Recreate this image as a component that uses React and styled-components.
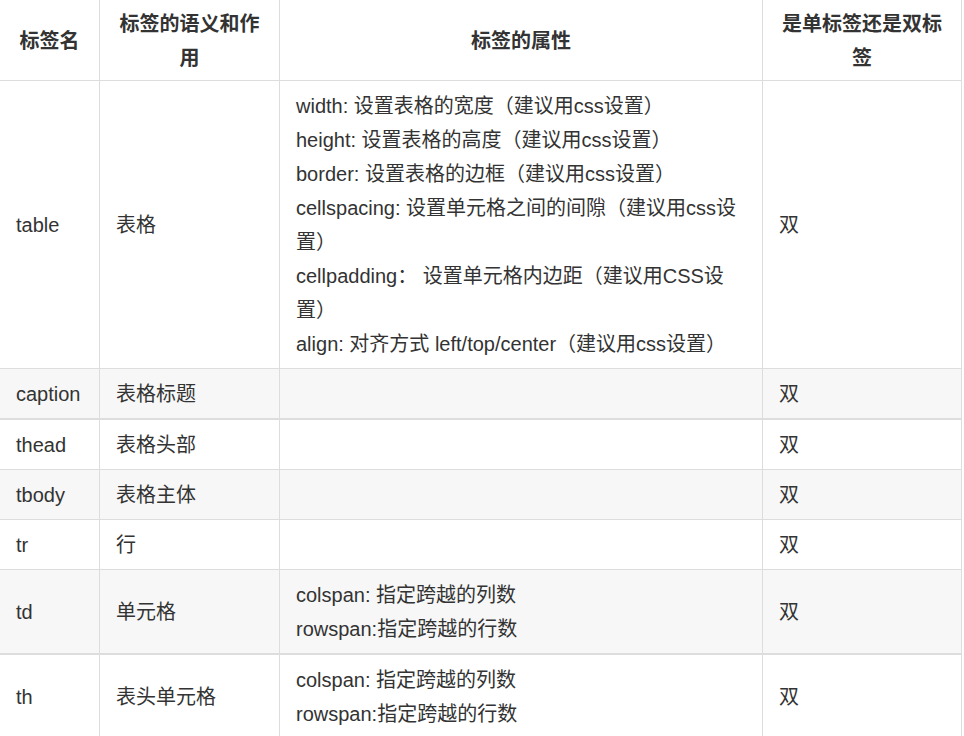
import React from 'react';
import styled, { createGlobalStyle } from 'styled-components';

const GlobalStyle = createGlobalStyle`
    html, body {
        margin: 0;
        padding: 0;
        background: #fff;
    }
    body {
        font-family: "Liberation Sans", "Noto Sans CJK SC", sans-serif;
        color: #333;
        overflow: hidden;
    }
`;

const Table = styled.table`
    width: 962px;
    margin: -1px 0 0 -1px;
    border-collapse: collapse;
    table-layout: fixed;
    font-size: 20px;
    line-height: 34px;
`;

const Col = styled.col`
    width: ${props => props.$w}px;
`;

const HeadCell = styled.th`
    border: 1px solid #ddd;
    padding: 7px 16px 5px;
    font-weight: bold;
    text-align: center;
    vertical-align: middle;
    color: #333;
`;

const Row = styled.tr`
    background: ${props => (props.$striped ? '#f7f7f7' : '#fff')};
    border-bottom: ${props => (props.$thick ? '2px' : '1px')} solid #ddd;
`;

const Cell = styled.td`
    border-left: 1px solid #ddd;
    border-right: 1px solid #ddd;
    padding: 8px 16px 7px;
    vertical-align: middle;
    text-align: left;
`;

const Line = styled.span`
    display: block;
    white-space: pre;
`;

const rows = [
    {
        name: 'table',
        meaning: '表格',
        attrs: [
            'width: 设置表格的宽度（建议用css设置）',
            'height: 设置表格的高度（建议用css设置）',
            'border: 设置表格的边框（建议用css设置）',
            'cellspacing: 设置单元格之间的间隙（建议用css设',
            '置）',
            'cellpadding： 设置单元格内边距（建议用CSS设',
            '置）',
            'align: 对齐方式 left/top/center（建议用css设置）'
        ]
    },
    { name: 'caption', meaning: '表格标题', attrs: [], thick: true },
    { name: 'thead', meaning: '表格头部', attrs: [] },
    { name: 'tbody', meaning: '表格主体', attrs: [] },
    { name: 'tr', meaning: '行', attrs: [] },
    {
        name: 'td',
        meaning: '单元格',
        attrs: ['colspan: 指定跨越的列数', 'rowspan:指定跨越的行数'],
        thick: true
    },
    {
        name: 'th',
        meaning: '表头单元格',
        attrs: ['colspan: 指定跨越的列数', 'rowspan:指定跨越的行数']
    }
];

export default function App() {
    return (
        <>
            <GlobalStyle />
            <Table>
                <colgroup>
                    <Col $w={100} />
                    <Col $w={180} />
                    <Col $w={483} />
                    <Col $w={199} />
                </colgroup>
                <thead>
                    <tr>
                        <HeadCell>标签名</HeadCell>
                        <HeadCell>标签的语义和作用</HeadCell>
                        <HeadCell>标签的属性</HeadCell>
                        <HeadCell>是单标签还是双标签</HeadCell>
                    </tr>
                </thead>
                <tbody>
                    {rows.map((row, i) => (
                        <Row key={row.name} $striped={i % 2 === 1} $thick={row.thick}>
                            <Cell>{row.name}</Cell>
                            <Cell>{row.meaning}</Cell>
                            <Cell>
                                {row.attrs.map((a, j) => (
                                    <Line key={j}>{a}</Line>
                                ))}
                            </Cell>
                            <Cell>双</Cell>
                        </Row>
                    ))}
                </tbody>
            </Table>
        </>
    );
}
